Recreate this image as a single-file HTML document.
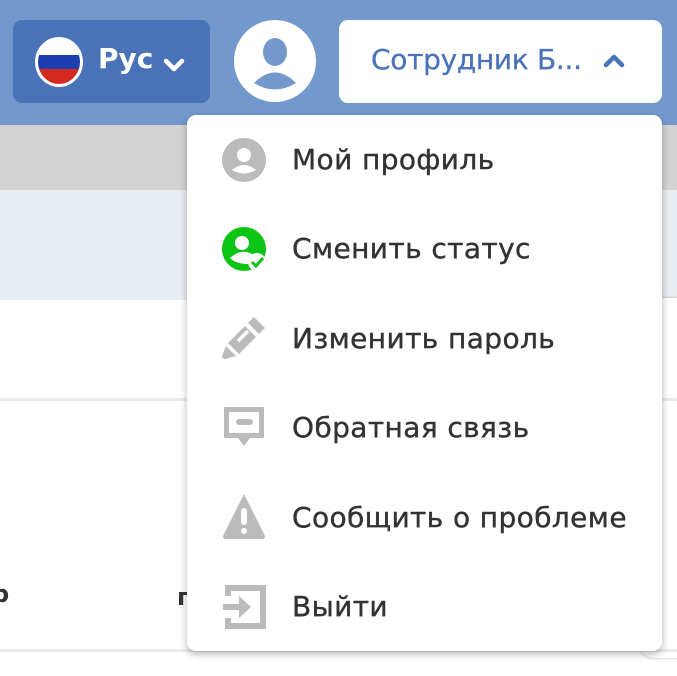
<!DOCTYPE html>
<html><head><meta charset="utf-8"><style>
*{margin:0;padding:0;box-sizing:border-box}
body{width:677px;height:676px;overflow:hidden;position:relative;background:#fff;font-family:"DejaVu Sans","Liberation Sans",sans-serif}
.hdr{position:absolute;left:0;top:0;width:677px;height:125px;background:#7398cc}
.band{position:absolute;left:0;top:125px;width:677px;height:65px;background:#d3d3d3}
.band2{position:absolute;left:0;top:190px;width:677px;height:110px;background:#e8edf1}
.line{position:absolute;left:0;width:677px;height:3px;background:#e8ecef}
.lang{position:absolute;left:13px;top:20px;width:197px;height:83px;background:#4a72b8;border-radius:9px}
.user{position:absolute;left:339px;top:20px;width:323px;height:83px;background:#fff;border-radius:9px}
.av{position:absolute;left:234px;top:20px;width:82px;height:82px;border-radius:50%;background:#fff}
.dd{position:absolute;left:187px;top:115px;width:475px;height:536px;background:#fff;border-radius:9px;box-shadow:0 3px 8px rgba(0,0,0,.3)}
.it{position:absolute;left:105px;font-size:28px;color:#333;line-height:32px;letter-spacing:0.4px;-webkit-text-stroke:0.4px #333}
.ic{position:absolute;left:34px}
</style></head><body>
<div class="hdr"></div>
<div class="band"></div>
<div class="band2"></div>
<div style="position:absolute;left:640px;top:298px;width:60px;height:360px;background:#fff;border-radius:14px;box-shadow:0 0 3px rgba(0,0,0,.25)"></div>
<div class="line" style="top:398px"></div>
<div class="line" style="top:649px"></div>
<div style="position:absolute;left:-8px;top:580px;font-size:24px;font-weight:bold;color:#333">р</div>
<div style="position:absolute;left:177px;top:583px;font-size:24px;font-weight:bold;color:#333">п</div>
<div class="lang">
<svg style="position:absolute;left:22px;top:17px" width="48" height="50" viewBox="0 0 48 50"><defs><clipPath id="c"><ellipse cx="24" cy="25" rx="21" ry="22"/></clipPath></defs><ellipse cx="24" cy="25" rx="24" ry="25" fill="#fff"/><g clip-path="url(#c)"><rect x="0" y="0" width="48" height="18" fill="#fff"/><rect x="0" y="18" width="48" height="14" fill="#1b3fb0"/><rect x="0" y="32" width="48" height="20" fill="#d42a20"/></g></svg>
<div style="position:absolute;left:85px;top:22px;font-size:28px;font-weight:bold;color:#fff">Рус</div>
<svg style="position:absolute;left:149px;top:36px" width="24" height="18" viewBox="0 0 24 18"><path d="M4 5 L12 13 L20 5" stroke="#fff" stroke-width="4.5" fill="none" stroke-linecap="round" stroke-linejoin="round"/></svg>
</div>
<div class="av"><svg width="82" height="82" viewBox="0 0 82 82"><ellipse cx="41" cy="32" rx="12" ry="14" fill="#7398cc"/><path d="M20 63 Q41 42 62 63 Q41 76 20 63Z" fill="#7398cc"/></svg></div>
<div class="user">
<div style="position:absolute;left:32px;top:23px;font-size:28px;color:#4a72b8;letter-spacing:-0.3px;-webkit-text-stroke:0.3px #4a72b8">Сотрудник Б...</div>
<svg style="position:absolute;left:263px;top:32px" width="24" height="18" viewBox="0 0 24 18"><path d="M4 13 L12 5 L20 13" stroke="#4a72b8" stroke-width="4.5" fill="none" stroke-linecap="round" stroke-linejoin="round"/></svg>
</div>
<div class="dd">
<svg class="ic" style="top:22px" width="46" height="46" viewBox="0 0 46 46"><circle cx="23" cy="23" r="22" fill="#bbb"/><circle cx="23" cy="18" r="7" fill="#fff"/><path d="M11 33 Q23 23 35 33 Q23 40 11 33Z" fill="#fff"/></svg>
<div class="it" style="top:29px">Мой профиль</div>
<svg class="ic" style="top:111px" width="46" height="46" viewBox="0 0 46 46"><circle cx="23" cy="23" r="22" fill="#0cc414"/><circle cx="21" cy="17" r="7" fill="#fff"/><path d="M9 32 Q20 22 31 28 L27 38 Q15 38 9 32Z" fill="#fff"/><circle cx="36" cy="36" r="9" fill="#fff"/><path d="M31 36 L35 40 L42 32" stroke="#0cc414" stroke-width="3" fill="none"/></svg>
<div class="it" style="top:118px">Сменить статус</div>
<svg class="ic" style="top:200px" width="46" height="46" viewBox="0 0 46 46"><path d="M33 2 L44 13 L38 19 L27 8Z" fill="#bbb"/><path d="M24 11 L35 22 L18 39 L7 28Z" fill="#bbb"/><path d="M17 26 L27 16" stroke="#fff" stroke-width="3.5"/><path d="M5 31 L15 41 L4 44 Q1 44 1 41Z" fill="#bbb"/></svg>
<div class="it" style="top:208px">Изменить пароль</div>
<svg class="ic" style="top:289px" width="46" height="46" viewBox="0 0 46 46"><path d="M3 3 H43 V34 H29 L23 42 L17 34 H3Z" fill="#bbb"/><rect x="8" y="8" width="30" height="21" fill="#fff"/><rect x="15" y="15" width="17" height="6" rx="3" fill="#bbb"/></svg>
<div class="it" style="top:297px">Обратная связь</div>
<svg class="ic" style="top:377px" width="46" height="48" viewBox="0 0 46 48"><path d="M23 2 L44 44 Q44 47 41 47 H5 Q2 47 2 44Z" fill="#bbb"/><rect x="20" y="16" width="6" height="17" rx="3" fill="#fff"/><circle cx="23" cy="39" r="3" fill="#fff"/></svg>
<div class="it" style="top:387px">Сообщить о проблеме</div>
<svg class="ic" style="top:469px" width="46" height="46" viewBox="0 0 46 46"><path d="M7 12 V4 H42 V42 H7 V34" stroke="#bbb" stroke-width="6" fill="none"/><path d="M2 23 H24" stroke="#bbb" stroke-width="6"/><path d="M18 12 L30 23 L18 34Z" fill="#bbb"/></svg>
<div class="it" style="top:476px">Выйти</div>
</div>
</body></html>
